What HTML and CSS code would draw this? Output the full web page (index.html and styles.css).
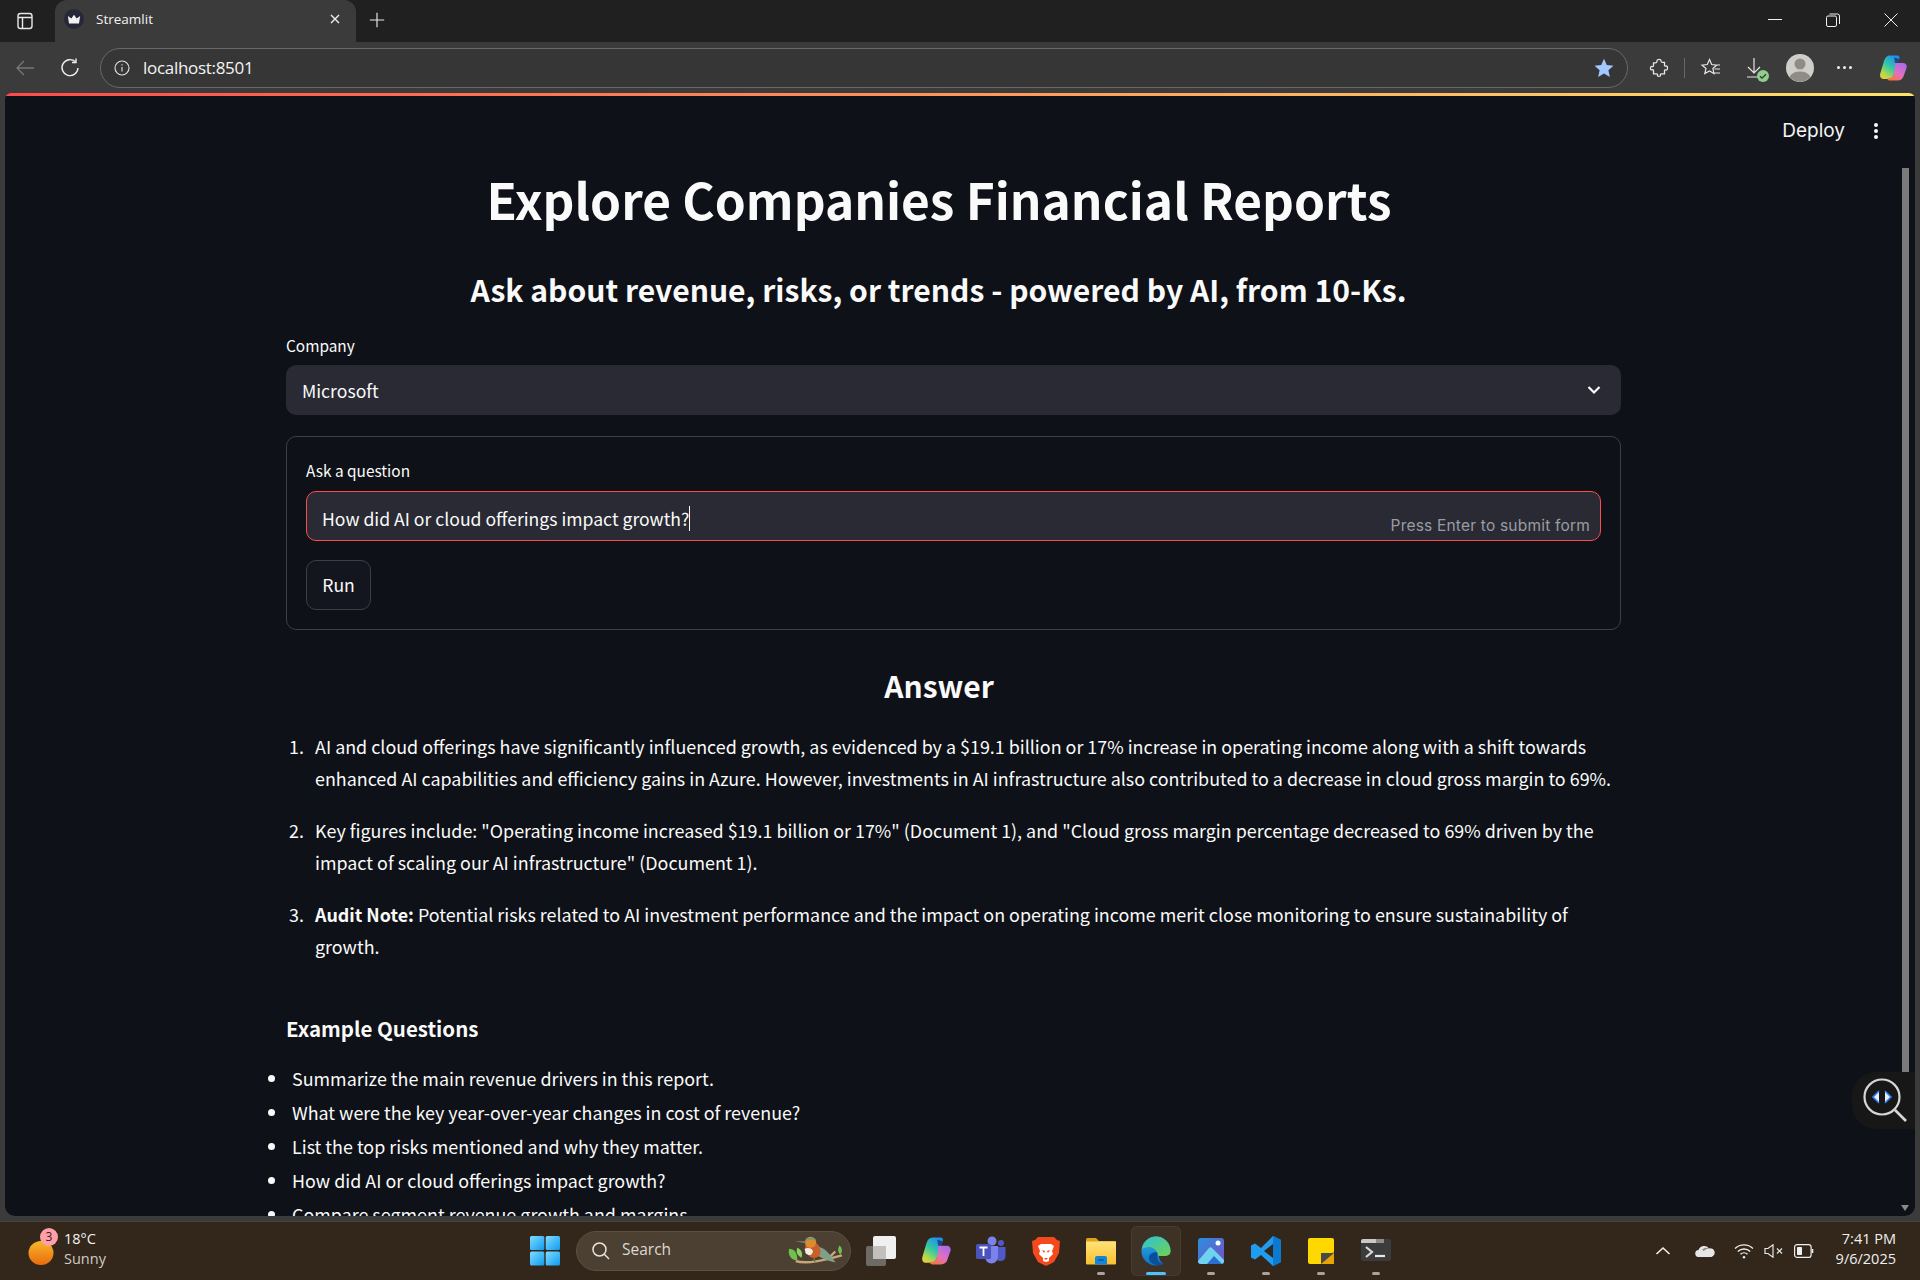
FILE: index.html
```html
<!DOCTYPE html>
<html lang="en">
<head>
<meta charset="utf-8">
<title>Streamlit</title>
<link rel="stylesheet" href="styles.css">
</head>
<body>
<svg class="defs" width="0" height="0">
  <defs>
    <linearGradient id="cpA" x1=".7" y1="0" x2=".1" y2="1"><stop offset="0" stop-color="#1f8ff0"/><stop offset=".45" stop-color="#35c9a0"/><stop offset=".8" stop-color="#b7d94a"/><stop offset="1" stop-color="#f6c93c"/></linearGradient>
    <linearGradient id="cpB" x1=".8" y1="0" x2=".2" y2="1"><stop offset="0" stop-color="#a86be8"/><stop offset=".55" stop-color="#e26fc0"/><stop offset="1" stop-color="#f5763c"/></linearGradient>
    <linearGradient id="sun" x1="0" y1="0" x2="0" y2="1"><stop offset="0" stop-color="#f6b62c"/><stop offset="1" stop-color="#ea6c0c"/></linearGradient>
    <linearGradient id="win" x1="0" y1="0" x2="1" y2="1"><stop offset="0" stop-color="#7fdcff"/><stop offset="1" stop-color="#0f9bf0"/></linearGradient>
    <linearGradient id="edgeA" x1="0" y1="0" x2="1" y2="1"><stop offset="0" stop-color="#2fc0d8"/><stop offset="1" stop-color="#6fd44e"/></linearGradient>
    <linearGradient id="edgeB" x1="0" y1="0" x2="0" y2="1"><stop offset="0" stop-color="#2bb4e0"/><stop offset="1" stop-color="#0f6fc4"/></linearGradient>
    <linearGradient id="photo" x1="0" y1="0" x2="1" y2="1"><stop offset="0" stop-color="#2a8fe0"/><stop offset="1" stop-color="#7a4fc4"/></linearGradient>
    <linearGradient id="folder" x1="0" y1="0" x2="0" y2="1"><stop offset="0" stop-color="#ffe27a"/><stop offset="1" stop-color="#fbc02d"/></linearGradient>
  </defs>
</svg>

<div class="tabstrip">
  <svg class="ic20" viewBox="0 0 20 20" fill="none" stroke="#e8e8e8" stroke-width="1.4"><rect x="3" y="2.500" width="14" height="15" rx="2.500"/><path d="M3 6.500h14M7.500 6.500v11"/></svg>
  <div class="tab">
    <span class="favicon"><svg viewBox="0 0 16 16" width="14" height="14"><path fill="#f2f2f2" d="M1 4.500 5 7.500 8 3l3 4.500 4-3-1.300 8.500H2.300z"/></svg></span>
    <span class="tab-title">Streamlit</span>
    <svg class="tab-close" viewBox="0 0 12 12" stroke="#f0f0f0" stroke-width="1.400"><path d="M2 2l8 8M10 2l-8 8"/></svg>
  </div>
  <svg class="newtab" viewBox="0 0 20 20" stroke="#e8e8e8" stroke-width="1.300"><path d="M10 2v16M2 10h16"/></svg>
  <div class="winctrl">
    <svg class="ic14" viewBox="0 0 14 14" stroke="#f0f0f0" stroke-width="1"><path d="M0 6.500h14"/></svg>
    <svg class="ic14" viewBox="0 0 14 14" fill="none" stroke="#f0f0f0" stroke-width="1"><rect x=".5" y="3" width="10" height="10.500" rx="1.500"/><path d="M3.500 1h8a2 2 0 0 1 2 2v8"/></svg>
    <svg class="ic14" viewBox="0 0 14 14" stroke="#f0f0f0" stroke-width="1"><path d="M.5.500l13 13M13.500.500l-13 13"/></svg>
  </div>
</div>

<div class="toolbar">
  <svg class="ic20 nav-back" viewBox="0 0 20 20" fill="none" stroke="#777" stroke-width="1.300"><path d="M19 10H2M9 3l-7 7 7 7"/></svg>
  <svg class="ic20 nav-reload" viewBox="0 0 20 20" fill="none" stroke="#efefef" stroke-width="1.400"><path d="M15.500 3.800A8 8 0 1 0 18 10"/><path d="M16 .500v4h-4"/></svg>
  <div class="urlbar">
    <svg class="ic16" viewBox="0 0 16 16" fill="none" stroke="#e4e4e4" stroke-width="1.100"><circle cx="8" cy="8" r="7"/><path d="M8 7v4.500M8 4.300v1.200"/></svg>
    <span class="url">localhost:8501</span>
    <svg class="ic22 star" viewBox="0 0 24 24" fill="#a3c8ff"><path d="M12 2l3 6.800 7.300.800-5.500 4.900 1.600 7.300L12 18.100l-6.400 3.700 1.600-7.300L1.700 9.600 9 8.800z"/></svg>
  </div>
  <div class="tools">
    <svg class="ic20" viewBox="0 0 20 20" fill="none" stroke="#e6e6e6" stroke-width="1.300"><path d="M8 2.800c0-2 4-2 4 0 0 1 .3 1.500 1.200 1.500h2.300v3c0 1 1 1 1.500.700 2-.7 2 4.500 0 4-.7-.3-1.500-.2-1.500.8v3h-3c-1 0-1.300.6-1 1.200.6 1.800-3.800 1.800-3 0 .3-.7 0-1.200-1-1.200h-3v-3c0-1-.7-1.300-1.500-1-2 .8-2-4 0-3.300.8.300 1.500 0 1.500-1v-2.700h2.300c1 0 1.200-.5 1.200-1.500z"/></svg>
    <span class="tool-sep"></span>
    <svg class="ic22 fav" viewBox="0 0 22 22" fill="none" stroke="#e6e6e6" stroke-width="1.200"><path d="M9.500 2.500l2.200 5 5 .6-3.800 3.400 1 5-4.400-2.600-4.700 2.700 1.200-5.100L2 8.100l5.300-.6zM15 8h5M14.500 12h5.500M14 16h6"/></svg>
    <span class="dl">
      <svg class="ic22" viewBox="0 0 22 22" fill="none" stroke="#e6e6e6" stroke-width="1.200"><path d="M10 1v15M4 10l6 6 6-6M3 20h11"/></svg>
      <svg class="dl-ok" viewBox="0 0 12 12"><circle cx="6" cy="6" r="6" fill="#8fce8f"/><path d="M3 6.200l2 2 4-4" fill="none" stroke="#2a3a2a" stroke-width="1.300"/></svg>
    </span>
    <svg class="avatar" viewBox="0 0 28 28"><circle cx="14" cy="14" r="14" fill="#d0cec9"/><circle cx="14" cy="10" r="5.500" fill="#8f8b85"/><path d="M3.500 23a11 8 0 0 1 21 0A14 14 0 0 1 3.500 23z" fill="#8f8b85"/></svg>
    <span class="more"><i></i><i></i><i></i></span>
    <svg class="copilot" viewBox="0 0 28 28"><path fill="url(#cpA)" d="M11 1.500h7c2 0 3 1.500 2.300 3.500L14.500 21c-.8 2.500-2.500 4-5 4H5C1.800 25 .5 22.500 1.300 19.500L5 7C6 3.500 8 1.500 11 1.500z"/><path fill="url(#cpB)" d="M16 9h8c2.800 0 4.200 2 3.500 5L25 21c-1 3.800-3.200 5.500-6.500 5.500H11c-2.200 0-3-1.200-2.200-2.500 3 .5 4.700-.5 5.500-3L16 14z"/><path fill="#1b2b6b" opacity=".75" d="M15.200 3.500 20.300 5 19 9h-3z"/></svg>
  </div>
</div>

<div class="viewport">
  <div class="page">
    <div class="rainbow"></div>
    <div class="page-body">
      <div class="app">
        <header class="st-header">
          <span class="deploy">Deploy</span>
          <span class="kebab"><i></i><i></i><i></i></span>
        </header>
        <main class="main">
          <h1 class="title">Explore Companies Financial Reports</h1>
          <h3 class="subtitle">Ask about revenue, risks, or trends - powered by AI, from 10-Ks.</h3>
          <label class="label">Company</label>
          <div class="select">
            <span>Microsoft</span>
            <svg class="chev" viewBox="0 0 14 10" fill="none" stroke="#fafafa" stroke-width="2.200"><path d="M1.500 2l5.500 5.500L12.500 2"/></svg>
          </div>
          <form class="form">
            <label class="label">Ask a question</label>
            <div class="input">
              <span class="input-text">How did AI or cloud offerings impact growth?</span><span class="caret"></span>
              <span class="hint">Press Enter to submit form</span>
            </div>
            <span class="run">Run</span>
          </form>
          <h3 class="answer-head">Answer</h3>
          <ol class="answer">
            <li>AI and cloud offerings have significantly influenced growth, as evidenced by a $19.1 billion or 17% increase in operating income along with a shift towards enhanced AI capabilities and efficiency gains in Azure. However, investments in AI infrastructure also contributed to a decrease in cloud gross margin to 69%.</li>
            <li>Key figures include: "Operating income increased $19.1 billion or 17%" (Document 1), and "Cloud gross margin percentage decreased to 69% driven by the impact of scaling our AI infrastructure" (Document 1).</li>
            <li><strong>Audit Note:</strong> Potential risks related to AI investment performance and the impact on operating income merit close monitoring to ensure sustainability of growth.</li>
          </ol>
          <h5 class="examples-head">Example Questions</h5>
          <ul class="examples">
            <li>Summarize the main revenue drivers in this report.</li>
            <li>What were the key year-over-year changes in cost of revenue?</li>
            <li>List the top risks mentioned and why they matter.</li>
            <li>How did AI or cloud offerings impact growth?</li>
            <li>Compare segment revenue growth and margins.</li>
          </ul>
        </main>
      </div>
      <div class="scrollbar">
        <div class="thumb"></div>
        <div class="arrow"></div>
      </div>
    </div>
    <div class="lens">
      <svg viewBox="0 0 44 44" width="44" height="44" fill="none"><circle cx="19" cy="19" r="17.500" stroke="#d6d6d6" stroke-width="2.200"/><path d="M32 32l11 11" stroke="#d6d6d6" stroke-width="2.600"/><path d="M16 13l-6 6 6 6" fill="#e8eefc" stroke="#2f7df0" stroke-width="1.600"/><path d="M22 13l6 6-6 6" fill="#e8eefc" stroke="#2f7df0" stroke-width="1.600"/></svg>
    </div>
  </div>
</div>

<footer class="taskbar">
  <div class="weather">
    <span class="wx-icon">
      <svg viewBox="0 0 26 26" width="26" height="26"><ellipse cx="13" cy="13" rx="12.500" ry="12" fill="url(#sun)"/></svg>
      <span class="wx-badge">3</span>
    </span>
    <span class="wx-text"><span>18°C</span><span class="wx-sub">Sunny</span></span>
  </div>
  <div class="center">
    <span class="cell">
      <svg class="ic30" viewBox="0 0 30 30" fill="url(#win)"><rect width="14.300" height="14" rx="1.500"/><rect x="15.700" width="14.300" height="14" rx="1.500"/><rect y="15.500" width="14.300" height="14" rx="1.500"/><rect x="15.700" y="15.500" width="14.300" height="14" rx="1.500"/></svg>
    </span>
    <div class="search">
      <svg class="ic20" viewBox="0 0 20 20" fill="none" stroke="#e8e4dc" stroke-width="1.500"><circle cx="8.500" cy="8.500" r="6.500"/><path d="M13.300 13.300L18 18"/></svg>
      <span class="search-text">Search</span>
      <svg class="bird" viewBox="20 20 170 100">
        <path d="M25 65c15 0 25 10 25 35-18 0-30-15-25-35z" fill="#6fc04e"/>
        <path d="M50 62c12 5 18 18 12 30-10-5-18-15-12-30z" fill="#8ed25e"/>
        <path d="M178 55c8 8 10 18 2 27-8-8-8-18-2-27z" fill="#6fc04e"/>
        <path d="M45 102C80 112 130 100 185 85M150 88l15-15" fill="none" stroke="#c8a878" stroke-width="7"/>
        <path d="M115 88 168 107 120 68z" fill="#c9702e"/>
        <path d="M100 60C125 52 145 75 165 105 135 100 105 90 100 60z" fill="#7ea08a"/>
        <path d="M75 50C70 75 85 95 105 92 120 90 125 75 115 55 105 40 80 35 75 50z" fill="#c8602c"/>
        <path d="M72 65C80 60 95 62 97 72 95 88 82 85 75 78z" fill="#f2ece2"/>
        <circle cx="90" cy="45" r="17" fill="#e08a2c"/>
        <path d="M73 42C78 28 100 25 108 42 95 35 82 36 73 42z" fill="#6e9a80"/>
        <path d="M75 42 42 42 75 48z" fill="#8a7f78"/>
        <path d="M100 92l3 14" stroke="#8a6a4a" stroke-width="4"/>
      </svg>
    </div>
    <span class="cell">
      <svg class="ic30" viewBox="0 0 30 30"><rect x="0" y="10" width="20" height="20" rx="2" fill="#6e6a64"/><rect x="7" y="0" width="23" height="23" rx="2" fill="#f0f0f0"/><rect x="7" y="10" width="13" height="13" fill="#c2c0bd"/></svg>
    </span>
    <span class="cell">
      <svg class="ic30" viewBox="0 0 28 28"><path fill="url(#cpA)" d="M11 1.500h7c2 0 3 1.500 2.300 3.500L14.500 21c-.8 2.500-2.500 4-5 4H5C1.800 25 .5 22.500 1.300 19.500L5 7C6 3.500 8 1.500 11 1.500z"/><path fill="url(#cpB)" d="M16 9h8c2.800 0 4.200 2 3.500 5L25 21c-1 3.800-3.200 5.500-6.500 5.500H11c-2.200 0-3-1.200-2.200-2.500 3 .5 4.700-.5 5.500-3L16 14z"/><path fill="#1b2b6b" opacity=".75" d="M15.200 3.500 20.300 5 19 9h-3z"/></svg>
    </span>
    <span class="cell">
      <svg class="ic30" viewBox="0 0 30 30"><circle cx="16" cy="5" r="4.500" fill="#7b83eb"/><circle cx="25" cy="7" r="3" fill="#5059c9"/><path d="M20 11h9.500v9c0 3-2 5-5 5s-4.500-1-4.500-3z" fill="#5059c9"/><path d="M9 10h13v11a6.500 6.500 0 0 1-13 0z" fill="#7b83eb"/><rect x="0" y="8" width="15" height="15" rx="1.500" fill="#4b53bc"/><path d="M3.500 11.500h8M7.500 11.500v8.500" stroke="#fff" stroke-width="1.800"/></svg>
    </span>
    <span class="cell">
      <svg class="ic30" viewBox="0 0 30 30"><path d="M7 1h16l3 3 3 1-1 12-5 9-8 4-8-4-5-9L1 5l3-1z" fill="#f4491c"/><path d="M10 8h10l3 2-2 5 1 3-4 4v3l-3 1-3-1v-3l-4-4 1-3-2-5z" fill="#fff"/><path d="M11 14l3 1-1 2zM19 14l-3 1 1 2zM13 22h4l-2 2z" fill="#f4491c"/></svg>
    </span>
    <span class="cell">
      <svg class="ic30" viewBox="0 0 30 28"><path d="M0 2.500A1.500 1.500 0 0 1 1.500 1H10l3 3h15.500A1.500 1.500 0 0 1 30 5.500V10H0z" fill="#dca21a"/><path d="M0 4.500h30v22a1 1 0 0 1-1 1H1a1 1 0 0 1-1-1z" fill="url(#folder)"/><path d="M9 21a2 2 0 0 1 2-2h8a2 2 0 0 1 2 2v6.500H9z" fill="#1585d8"/><path d="M12 23h6" stroke="#0b4f8a" stroke-width="1.200"/></svg>
      <i class="dot"></i>
    </span>
    <span class="cell active">
      <svg class="ic30" viewBox="0 0 30 30">
        <circle cx="15" cy="15" r="14.500" fill="url(#edgeB)"/>
        <path d="M15 .5A14.500 14.500 0 0 1 29.500 15c0 3.200-2.200 5-5 5h-6c-1.500 0-2.300-1-2.300-2.500C16.200 14 12 11 7.500 11 5 11 2.500 12 .8 13 2 6 8 .5 15 .5z" fill="url(#edgeA)"/>
        <path d="M16.500 16.500c-4.500-.8-8.500 1.500-8.500 5.500 0 4.500 5 7.500 10.500 7 2-.2 3.500-.7 5-1.500-3.500.5-7-2-7-6 0-2 0-3.500 0-5z" fill="#0b4f9c"/>
        <path d="M18 20h6.500c2.400 0 4.500-1.200 5.500-3.500V30H20c4.500-1 3.500-2 1.500-3-2-1.200-3.500-4-3.500-7z" fill="#3d3225"/>
      </svg>
      <i class="dot dot-on"></i>
    </span>
    <span class="cell">
      <svg class="ic26" viewBox="0 0 26 26"><rect width="26" height="26" rx="3" fill="url(#photo)"/><circle cx="20" cy="5" r="2.500" fill="#fff"/><path d="M0 23l11-13c1-1 2-1 3 0l12 12v1a3 3 0 0 1-3 3H3a3 3 0 0 1-3-3z" fill="#6fd3f0"/><path d="M9 26l7-8 8 8z" fill="#2c6fd0"/></svg>
      <i class="dot"></i>
    </span>
    <span class="cell">
      <svg class="ic30" viewBox="0 0 30 30"><path d="M22 0l8 4v22l-8 4-12-11-6 4.500-4-2V9.500l4-2L10 12z" fill="#1f9cf0"/><path d="M22 0v30l8-4V4z" fill="#0b7ad1"/><path d="M22 8l-9 7 9 7z" fill="#32271a"/></svg>
      <i class="dot"></i>
    </span>
    <span class="cell">
      <svg class="ic26" viewBox="0 0 26 26"><path d="M2 0h22a2 2 0 0 1 2 2v24H2a2 2 0 0 1-2-2V2a2 2 0 0 1 2-2z" fill="#ffd800"/><path d="M26 13v13H13v-3z" fill="#e8a400"/><path d="M13 26V15h13z" fill="#4a4a4a"/></svg>
      <i class="dot"></i>
    </span>
    <span class="cell">
      <svg class="ic30" viewBox="0 0 30 24"><rect width="30" height="22" rx="2" fill="#3c3c3c"/><path d="M0 2a2 2 0 0 1 2-2h13v4H0z" fill="#c9c9c9"/><path d="M15 0h8v4h-8z" fill="#8c8c8c"/><path d="M5 8l6 5-6 5" fill="none" stroke="#d8d8d8" stroke-width="2.200"/><path d="M14 17h10" stroke="#e8e8e8" stroke-width="2.200"/></svg>
      <i class="dot"></i>
    </span>
  </div>
  <div class="tray">
    <svg class="tray-chev" viewBox="0 0 16 10" fill="none" stroke="#f0f0f0" stroke-width="1.600"><path d="M1.500 8L8 2l6.500 6"/></svg>
    <svg class="tray-cloud" viewBox="0 0 20 12"><path d="M4 12a3.500 3.500 0 0 1-.5-7A6 6 0 0 1 14 3.500 4 4 0 0 1 16.500 12z" fill="#e6e6e6"/><path d="M7 5a6 6 0 0 1 7-1.500C11 4 9.500 5 9 6z" fill="#8e8a85"/></svg>
    <svg class="tray-wifi" viewBox="0 0 20 16" fill="none" stroke="#efefef" stroke-width="1.300"><path d="M1 5.500a13 13 0 0 1 18 0M3.800 8.500a9 9 0 0 1 12.400 0M6.500 11.300a5 5 0 0 1 7 0"/><circle cx="10" cy="14.200" r="1.200" fill="#efefef" stroke="none"/></svg>
    <svg class="tray-mute" viewBox="0 0 20 14" fill="none" stroke="#e8e8e8" stroke-width="1.200"><path d="M1 4.500h3L9 .800v12.400L4 9.500H1zM13 4.500l5 5M18 4.500l-5 5"/></svg>
    <svg class="tray-batt" viewBox="0 0 20 14" fill="none" stroke="#efefef" stroke-width="1.200"><rect x=".6" y=".6" width="16.500" height="12.800" rx="2.500"/><path d="M18.500 5v4" stroke-width="1.600"/><rect x="3" y="3" width="5" height="8" rx=".8" fill="#efefef" stroke="none"/></svg>
    <div class="clock"><span>7:41 PM</span><span>9/6/2025</span></div>
  </div>
</footer>
</body>
</html>
```

FILE: styles.css
```css
* { box-sizing: border-box; }
html, body { margin: 0; height: 1280px; overflow: hidden; }
body {
  width: 1920px;
  display: flex;
  flex-direction: column;
  background: #3b3b3b;
  color: #fafafa;
  font-family: "Noto Sans CJK SC", "Noto Sans", sans-serif;
}
.defs { position: absolute; }
svg { display: block; flex: none; }
.ic14 { width: 14px; height: 14px; }
.ic16 { width: 16px; height: 16px; }
.ic20 { width: 20px; height: 20px; }
.ic22 { width: 22px; height: 22px; }
.ic26 { width: 26px; height: 26px; }
.ic30 { width: 30px; height: 30px; }

/* browser chrome */
.tabstrip {
  height: 42px;
  flex: none;
  display: flex;
  align-items: center;
  padding-left: 15px;
  background: #202020;
  font-family: "Open Sans", sans-serif;
}
.tab {
  width: 301px;
  height: 42px;
  margin-left: 20px;
  padding: 0 15px 4px 9px;
  display: flex;
  align-items: center;
  background: #3b3b3b;
  border-radius: 12px 12px 0 0;
}
.favicon {
  width: 20px;
  height: 20px;
  border-radius: 50%;
  background: #26283a;
  display: flex;
  align-items: center;
  justify-content: center;
}
.tab-title { margin-left: 12px; font-size: 13.500px; color: #f2f2f2; flex: 1; }
.tab-close { width: 12px; height: 12px; }
.newtab { width: 18px; height: 18px; margin-left: 12px; margin-top: -2px; }
.winctrl { margin-left: auto; display: flex; gap: 44px; padding-right: 22px; margin-top: -2px; }

.toolbar {
  height: 51px;
  flex: none;
  display: flex;
  align-items: center;
  padding: 0 0 0 15px;
  background: #3b3b3b;
  font-family: "Open Sans", sans-serif;
}
.nav-reload { margin-left: 25px; }
.urlbar {
  flex: none;
  width: 1528px;
  height: 40px;
  margin-left: 20px;
  padding: 0 12px 0 13px;
  display: flex;
  align-items: center;
  border: 1px solid #686868;
  border-radius: 20px;
  background: #363636;
}
.url { margin-left: 13px; font-size: 17px; color: #f4f4f4; letter-spacing: -.3px; }
.star { margin-left: auto; }
.tools { display: flex; align-items: center; margin-left: 21px; flex: 1; }
.tool-sep { width: 1px; height: 20px; background: #666; margin-left: 15px; }
.fav { margin-left: 15px; }
.dl { position: relative; margin-left: 22px; }
.dl-ok { position: absolute; width: 12px; height: 12px; right: -3px; bottom: -3px; }
.avatar { width: 28px; height: 28px; margin-left: 20px; }
.more { display: flex; gap: 3px; margin-left: 23px; }
.more i { width: 3px; height: 3px; background: #eee; border-radius: 50%; }
.copilot { width: 28px; height: 28px; margin-left: 27px; }

/* page */
.viewport { flex: none; height: 1123px; padding: 0 5px; }
.page {
  position: relative;
  height: 100%;
  display: flex;
  flex-direction: column;
  background: #0e1117;
  border-radius: 6px 6px 10px 10px;
  overflow: hidden;
}
.rainbow { flex: none; height: 3px; background: linear-gradient(90deg, #ff4b4b, #ffe36a); }
.page-body { flex: 1; display: flex; min-height: 0; }
.app { flex: 1; min-width: 0; overflow: hidden; }
.st-header {
  height: 60px;
  padding: 8px 24px 0 0;
  display: flex;
  align-items: center;
  justify-content: flex-end;
}
.deploy { font-family: "Inter", sans-serif; font-size: 19px; color: #f4f4f4; }
.kebab { display: flex; flex-direction: column; gap: 2px; margin: 2px 0 0 29px; }
.kebab i { width: 4px; height: 4px; background: #fafafa; border-radius: 50%; }
.main { width: 1335px; margin-left: 281px; font-size: 17.600px; }

.title { margin: 0 0 0 -29px; text-align: center; font-size: 49.600px; line-height: 68px; font-weight: 700; padding-top: 8px; }
.subtitle { margin: 35px 0 0 -30px; text-align: center; font-size: 30.100px; line-height: 44px; font-weight: 600; }
.label { display: block; font-size: 15.400px; line-height: 22px; color: #fafafa; }
.subtitle + .label { margin-top: 23px; }
.select {
  height: 50px;
  margin-top: 9px;
  padding: 0 20px 0 16px;
  display: flex;
  align-items: center;
  justify-content: space-between;
  background: #292a33;
  border-radius: 10px;
}
.chev { width: 14px; height: 10px; }
.form {
  height: 194px;
  margin-top: 21px;
  padding: 22px 19px 0;
  border: 1px solid #3d3f45;
  border-radius: 10px;
}
.input {
  position: relative;
  height: 50px;
  margin-top: 10px;
  padding: 4px 15px 0;
  display: flex;
  align-items: center;
  background: #292a33;
  border: 1px solid #ff4b4b;
  border-radius: 10px;
}
.caret { width: 1px; height: 25px; background: #fafafa; }
.hint {
  position: absolute;
  right: 10px;
  bottom: 5px;
  font-family: "Inter", sans-serif;
  font-size: 15.500px;
  letter-spacing: .2px;
  color: #9a9ca2;
}
.run {
  width: 65px;
  height: 50px;
  margin-top: 19px;
  padding-bottom: 2px;
  display: flex;
  align-items: center;
  justify-content: center;
  background: #13161e;
  border: 1px solid #3d3f45;
  border-radius: 10px;
}
.answer-head { margin: 35px 0 0 -29px; text-align: center; font-size: 30px; line-height: 40px; font-weight: 600; }
.answer { margin: 25px 0 0; padding: 0 0 0 22px; font-size: 17.900px; line-height: 32px; }
.answer li { margin-bottom: 20px; padding-left: 7px; }
.answer li:last-child { margin-bottom: 0; }
.answer strong { font-weight: 700; }
.examples-head { margin: 50px 0 0; font-size: 20.500px; line-height: 32px; font-weight: 700; }
.examples { margin: 17px 0 0 -23px; padding: 0 0 0 26px; font-size: 17.900px; line-height: 34px; }
.examples li { padding-left: 3px; }

.scrollbar { flex: none; width: 10px; margin-right: 3px; position: relative; }
.thumb { position: absolute; left: 0; top: 72px; height: 960px; background: #7b7b7b; width: 7px; }
.arrow {
  position: absolute;
  left: -1px;
  bottom: 5px;
  width: 0;
  height: 0;
  border-left: 4px solid transparent;
  border-right: 4px solid transparent;
  border-top: 6px solid #8a8a8a;
}
.lens {
  position: absolute;
  right: 0;
  top: 979px;
  width: 63px;
  height: 57px;
  padding: 6px 0 0 11px;
  background: #171717;
  border-radius: 24px 0 0 24px;
}

/* taskbar */
.taskbar {
  flex: none;
  height: 59px;
  margin-top: 5px;
  padding-bottom: 1px;
  display: flex;
  align-items: center;
  background: #32271a;
  border-top: 1px solid #4a4238;
  font-family: "Open Sans", sans-serif;
}
.weather { width: 517px; flex: none; display: flex; align-items: center; padding-left: 28px; }
.wx-icon { position: relative; width: 26px; height: 26px; margin-top: 4px; }
.wx-badge {
  position: absolute;
  left: 12px;
  top: -12px;
  width: 18px;
  height: 18px;
  border-radius: 50%;
  background: #ffa0a8;
  color: #3a1a1a;
  font-size: 12px;
  line-height: 18px;
  text-align: center;
}
.wx-text { display: flex; flex-direction: column; margin: -3px 0 0 10px; font-size: 14.500px; line-height: 20px; color: #f2f2f2; }
.wx-sub { color: #cfcbc4; }
.center { display: flex; align-items: center; }
.cell {
  position: relative;
  width: 55px;
  height: 50px;
  display: flex;
  align-items: center;
  justify-content: center;
  border-radius: 6px;
}
.cell.active { width: 50px; margin: 0 2.500px; background: #3d3225; box-shadow: inset 0 0 0 1px #463b2d; }
.dot { position: absolute; left: 50%; bottom: 1px; width: 8px; height: 3px; margin-left: -4px; background: #a9a39a; border-radius: 2px; }
.dot-on { width: 20px; margin-left: -10px; background: #4cc2ff; }
.search {
  width: 275px;
  height: 40px;
  margin: 0 2px 0 4px;
  padding: 0 6px 0 14px;
  display: flex;
  align-items: center;
  background: #4c4033;
  border: 1px solid #5c5043;
  border-radius: 20px;
}
.search-text { margin-left: 11px; font-size: 15.500px; color: #dcd8d0; margin-top: -3px; }
.bird { width: 57px; height: 33px; margin-left: auto; }
.tray { margin-left: auto; display: flex; align-items: center; padding-right: 24px; }
.tray-chev { width: 16px; height: 10px; }
.tray-cloud { width: 20px; height: 12px; margin-left: 24px; }
.tray-wifi { width: 20px; height: 16px; margin-left: 19px; }
.tray-mute { width: 20px; height: 14px; margin-left: 10px; }
.tray-batt { width: 20px; height: 14px; margin-left: 10px; }
.clock { display: flex; flex-direction: column; align-items: flex-end; margin: -3px 0 0 22px; font-size: 14.500px; line-height: 20px; color: #f0f0f0; }
```
